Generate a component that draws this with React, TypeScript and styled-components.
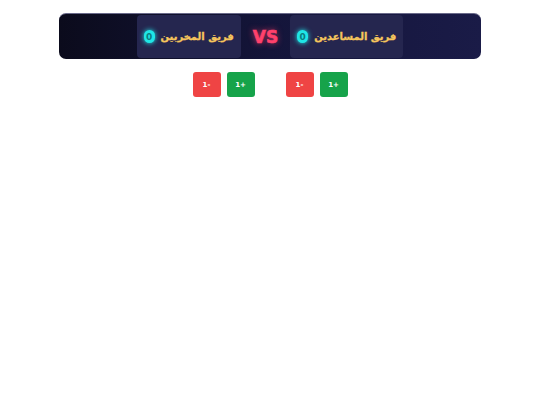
import styled, { createGlobalStyle } from 'styled-components'
import { useState } from 'react'

const GlobalStyle = createGlobalStyle`
  body {
    margin: 0;
    background: #ffffff;
    font-family: "DejaVu Sans", "Noto Sans", sans-serif;
  }
`

const Page = styled.div`
  direction: rtl;
  padding: 13px 59px 0;
  display: flex;
  flex-direction: column;
  align-items: center;
  gap: 13px;
`

const Scoreboard = styled.div`
  width: 100%;
  box-sizing: border-box;
  height: 46px;
  display: flex;
  align-items: center;
  justify-content: center;
  gap: 12px;
  padding: 1px;
  border-radius: 7px;
  border-top: 1px solid #6a6a8a;
  background: linear-gradient(to left, #1a1b47, #14153a 50%, #0b0b1c);
`

const TeamCard = styled.div`
  height: 43px;
  box-sizing: border-box;
  display: flex;
  align-items: center;
  gap: 6px;
  padding: 0 7px;
  border-radius: 4px;
  background: #25264f;
`

const TeamName = styled.span`
  color: #f6c65c;
  font-size: 10px;
  font-weight: 700;
  white-space: nowrap;
  -webkit-text-stroke: 0.3px #f6c65c;
`

const Score = styled.span`
  display: inline-flex;
  align-items: center;
  justify-content: center;
  width: 11px;
  height: 13px;
  border-radius: 6px;
  background: #1fe6e6;
  color: #0b7c80;
  font-size: 9px;
  font-weight: 700;
  box-shadow: 0 0 5px #1ff0f0;
`

const Versus = styled.span`
  direction: ltr;
  color: #ff416c;
  font-family: "DejaVu Sans", sans-serif;
  font-size: 17px;
  font-weight: 900;
  -webkit-text-stroke: 0.6px #ff416c;
  text-shadow: 0 0 6px rgba(255, 65, 108, 0.8);
`

const Controls = styled.div`
  display: flex;
  gap: 31px;
`

const ButtonPair = styled.div`
  display: flex;
  gap: 6px;
`

const ScoreButton = styled.button<{ $tone: 'add' | 'sub' }>`
  width: 28px;
  height: 25px;
  padding: 0;
  border: none;
  border-radius: 3px;
  cursor: pointer;
  color: #ffffff;
  font-family: "DejaVu Sans", sans-serif;
  font-size: 7px;
  font-weight: 700;
  direction: rtl;
  background: ${(p) => (p.$tone === 'add' ? '#16a34a' : '#ef4444')};
`

const teams = ['فريق المساعدين', 'فريق المخربين']

export default function App() {
  const [scores, setScores] = useState([0, 0])
  const bump = (i: number, d: number) =>
    setScores((s) => s.map((v, j) => (j === i ? v + d : v)))

  return (
    <>
      <GlobalStyle />
      <Page>
        <Scoreboard>
          <TeamCard>
            <TeamName>{teams[0]}</TeamName>
            <Score>{scores[0]}</Score>
          </TeamCard>
          <Versus>VS</Versus>
          <TeamCard>
            <TeamName>{teams[1]}</TeamName>
            <Score>{scores[1]}</Score>
          </TeamCard>
        </Scoreboard>
        <Controls>
          {teams.map((t, i) => (
            <ButtonPair key={t}>
              <ScoreButton $tone="add" onClick={() => bump(i, 1)}>
                +1
              </ScoreButton>
              <ScoreButton $tone="sub" onClick={() => bump(i, -1)}>
                -1
              </ScoreButton>
            </ButtonPair>
          ))}
        </Controls>
      </Page>
    </>
  )
}
